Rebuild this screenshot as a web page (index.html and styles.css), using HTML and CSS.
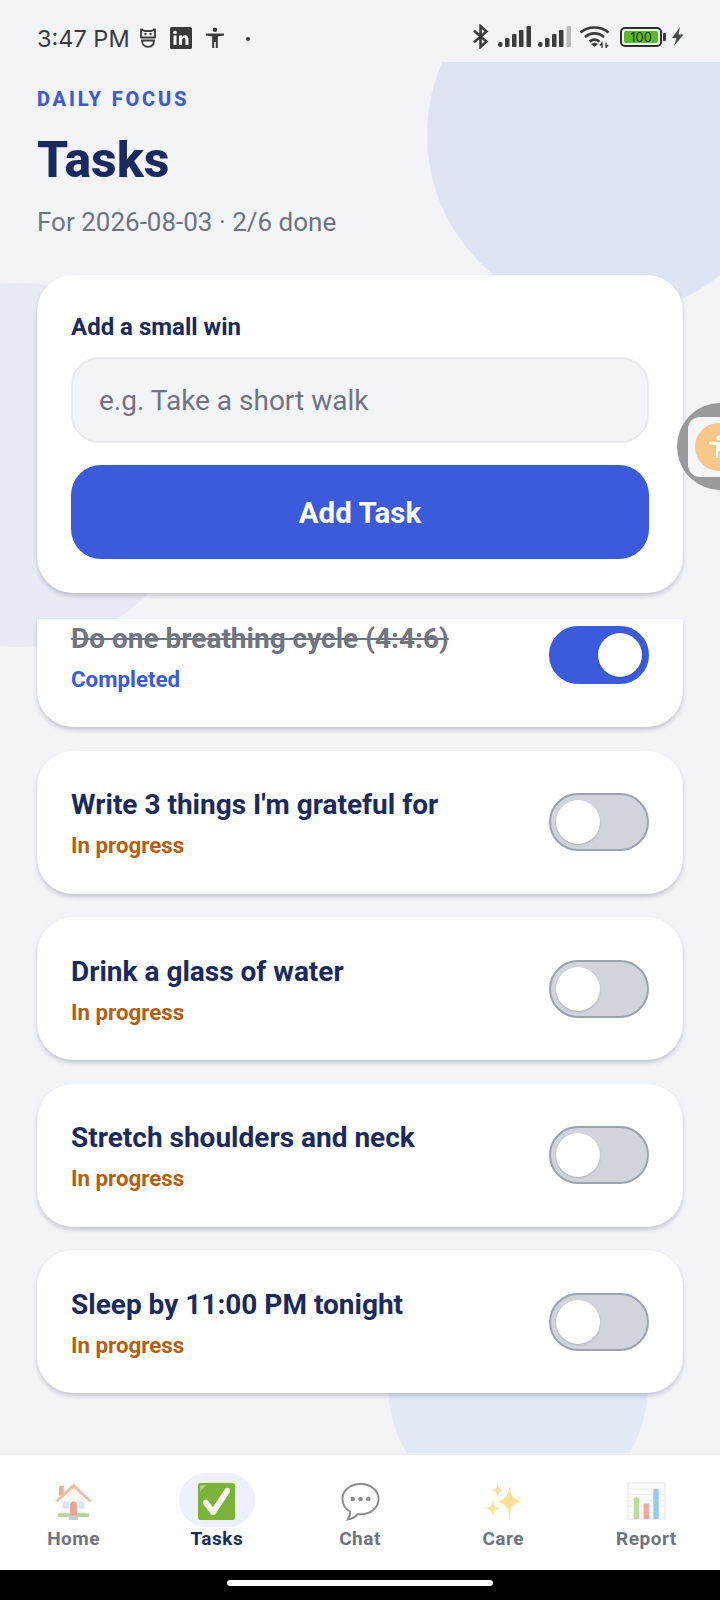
FILE: index.html
```html
<!DOCTYPE html>
<html lang="en">
<head>
<meta charset="utf-8">
<title>Tasks</title>
<link rel="stylesheet" href="styles.css">
</head>
<body>
<div class="screen">
  <div class="decor">
    <div class="blob blob-top"></div>
    <div class="blob blob-left"></div>
    <div class="blob blob-bottom"></div>
  </div>

  <div class="statusbar">
    <div class="status-left">
      <span class="time">3:47 PM</span>
      <svg class="ic-robot" viewBox="0 0 18 20"><path d="M2 1.500C3.500 1.500 4.500 2.500 5.500 3H12.500C13.500 2.500 14.500 1.500 16 1.500V9.500H2Z" fill="none" stroke="#3a3b3e" stroke-width="1.800" stroke-linejoin="round"/><circle cx="6.500" cy="6" r="1.200" fill="#3a3b3e"/><circle cx="11.500" cy="6" r="1.200" fill="#3a3b3e"/><path d="M3 12.500H15C15 16.500 12.500 18.800 9 18.800S3 16.500 3 12.500Z" fill="none" stroke="#3a3b3e" stroke-width="1.800"/></svg>
      <svg class="ic-in" viewBox="0 0 22 22"><rect width="22" height="22" rx="1.500" fill="#3a3b3e"/><rect x="3.500" y="8.500" width="3" height="9.500" fill="#fff"/><circle cx="5" cy="5.500" r="1.800" fill="#fff"/><path d="M9 8.500H12V10C12.600 9 13.700 8.300 15 8.300C17.500 8.300 18.500 10 18.500 12.500V18H15.500V13C15.500 11.800 15 11 14 11S12 11.800 12 13V18H9Z" fill="#fff"/></svg>
      <svg class="ic-person" viewBox="0 0 20 22"><circle cx="10" cy="2.800" r="2.300" fill="#3a3b3e"/><path d="M1 6.500H19V8.500L12.800 9.500V21H10.800V15H9.200V21H7.200V9.500L1 8.500Z" fill="#3a3b3e"/></svg>
      <span class="status-dot"></span>
    </div>
    <div class="status-right">
      <svg class="ic-bt" viewBox="0 0 17 25"><path d="M2 6.800 14.500 17.500 8.500 23V2L14.500 7.500 2 18.200" fill="none" stroke="#3a3b3e" stroke-width="2.500"/></svg>
      <svg class="ic-signal" viewBox="0 0 33 21"><rect x="0" y="16" width="4.500" height="5" rx="2" fill="#3a3b3e"/><rect x="7" y="12" width="4.500" height="9" rx="1.500" fill="#3a3b3e"/><rect x="14" y="8" width="4.500" height="13" rx="1" fill="#3a3b3e"/><rect x="21" y="4" width="4.500" height="17" rx="1" fill="#3a3b3e"/><rect x="28.500" y="0" width="4.500" height="21" rx="1" fill="#3a3b3e"/></svg>
      <svg class="ic-signal" viewBox="0 0 33 21"><rect x="0" y="16" width="4.500" height="5" rx="2" fill="#3a3b3e"/><rect x="7" y="12" width="4.500" height="9" rx="1.500" fill="#3a3b3e"/><rect x="14" y="8" width="4.500" height="13" rx="1" fill="#3a3b3e"/><rect x="21" y="4" width="4.500" height="17" rx="1" fill="#3a3b3e"/><rect x="28.500" y="0" width="4.500" height="21" rx="1" fill="#b9babc"/></svg>
      <svg class="ic-wifi" viewBox="0 0 31 23"><path d="M1.500 7.500C9 .8 22 .8 29.500 7.500M6 12C11.500 7.200 19.500 7.200 25 12M10.500 16.500C13.500 14.200 17.500 14.200 20.500 16.500" fill="none" stroke="#3a3b3e" stroke-width="2.600"/><path d="M12 19 15.500 17.500 19 19 15.500 22Z" fill="#3a3b3e"/><path d="M23 23V18L21 20.500M27 17.500V22.500L29 20" fill="none" stroke="#3a3b3e" stroke-width="1.300"/></svg>
      <div class="battery"><span class="battery-level">100</span></div>
      <span class="battery-cap"></span>
      <svg class="ic-bolt" viewBox="0 0 13 19"><path d="M9 0 1 11H5.500L3 19 12.500 7.500H7.500Z" fill="#4a4b4e"/></svg>
    </div>
  </div>

  <header class="head">
    <div class="eyebrow">DAILY FOCUS</div>
    <h1 class="title">Tasks</h1>
    <p class="subtitle">For 2026-08-03 · 2/6 done</p>
  </header>

  <section class="add-card">
    <label class="add-label" for="task">Add a small win</label>
    <input class="add-input" id="task" type="text" placeholder="e.g. Take a short walk">
    <button class="add-btn" type="button">Add Task</button>
  </section>

  <section class="list">
    <article class="task task-cut">
      <div class="task-text">
        <div class="task-name task-name-done">Do one breathing cycle (4:4:6)</div>
        <div class="task-state state-done">Completed</div>
      </div>
      <div class="toggle toggle-on"><span class="knob"></span></div>
    </article>
    <article class="task">
      <div class="task-text">
        <div class="task-name">Write 3 things I'm grateful for</div>
        <div class="task-state state-open">In progress</div>
      </div>
      <div class="toggle"><span class="knob"></span></div>
    </article>
    <article class="task">
      <div class="task-text">
        <div class="task-name">Drink a glass of water</div>
        <div class="task-state state-open">In progress</div>
      </div>
      <div class="toggle"><span class="knob"></span></div>
    </article>
    <article class="task">
      <div class="task-text">
        <div class="task-name">Stretch shoulders and neck</div>
        <div class="task-state state-open">In progress</div>
      </div>
      <div class="toggle"><span class="knob"></span></div>
    </article>
    <article class="task">
      <div class="task-text">
        <div class="task-name">Sleep by 11:00 PM tonight</div>
        <div class="task-state state-open">In progress</div>
      </div>
      <div class="toggle"><span class="knob"></span></div>
    </article>
  </section>

  <nav class="tabbar">
    <div class="tab">
      <span class="tab-icon faded">
        <svg viewBox="0 0 40 40"><rect x="5" y="4" width="5" height="10" fill="#c8674a"/><path d="M7 20 20 6 33 20V34H7Z" fill="#f6efe2"/><path d="M1.500 19 20 1.500 38.500 19 36 20.500 20 6 4 20.500Z" fill="#e07b4e"/><rect x="4" y="32" width="32" height="4" fill="#7fa04a"/><rect x="9" y="20" width="6" height="7" fill="#a9d4ea"/><rect x="25" y="20" width="6" height="7" fill="#a9d4ea"/><path d="M16.500 34V23C16.500 19 23.500 19 23.500 23V34Z" fill="#c8502e"/><rect x="15" y="35" width="10" height="4" fill="#9b9b9b"/></svg>
      </span>
      <span class="tab-label">Home</span>
    </div>
    <div class="tab">
      <span class="tab-icon tab-icon-active">
        <svg viewBox="0 0 40 40"><rect x="1" y="1" width="38" height="38" rx="3" fill="#7cb13a"/><path d="M3 10V5C3 3.500 4 3 5 3H10Z" fill="#a9d06a"/><path d="M9 21 16.500 31 31 9" fill="none" stroke="#f5f7f0" stroke-width="6" stroke-linecap="round" stroke-linejoin="round"/></svg>
      </span>
      <span class="tab-label tab-label-active">Tasks</span>
    </div>
    <div class="tab">
      <span class="tab-icon">
        <svg viewBox="0 0 40 40"><path d="M20 2C9.500 2 1.500 8.500 1.500 17.500C1.500 23.500 5 28 9.500 30.500C9.500 33.500 8.500 36 7 38.500C11.500 38 15 35.500 17 33C18 33 19 33 20 33C30.500 33 38.500 26.500 38.500 17.500S30.500 2 20 2Z" fill="#fff" stroke="#8a8b8d" stroke-width="2"/><circle cx="12" cy="17.500" r="2.300" fill="#8a8b8d"/><circle cx="20" cy="17.500" r="2.300" fill="#8a8b8d"/><circle cx="28" cy="17.500" r="2.300" fill="#8a8b8d"/></svg>
      </span>
      <span class="tab-label">Chat</span>
    </div>
    <div class="tab">
      <span class="tab-icon faded">
        <svg viewBox="0 0 40 40"><path d="M26 3 C27 14 29 17 38 20 C29 23 27 26 26 38 C25 26 23 23 14 20 C23 17 25 14 26 3Z" fill="#f6c533"/><path d="M14 1C14.500 6 15.500 7.500 20 8.500C15.500 9.500 14.500 11 14 16C13.500 11 12.500 9.500 8 8.500C12.500 7.500 13.500 6 14 1Z" fill="#f5b82a"/><path d="M9 18C9.600 24 11 25.500 16 27C11 28.500 9.600 30 9 36C8.400 30 7 28.500 2 27C7 25.500 8.400 24 9 18Z" fill="#f6c533"/></svg>
      </span>
      <span class="tab-label">Care</span>
    </div>
    <div class="tab">
      <span class="tab-icon faded">
        <svg viewBox="0 0 40 40"><rect x="1" y="1" width="38" height="37" fill="#fbfbfb" stroke="#c9ced3" stroke-width="1"/><path d="M1 7H39M1 13H39M1 19H39M1 25H39M1 31H39" stroke="#dcdfe3" stroke-width="1"/><rect x="7" y="16" width="5.500" height="22" fill="#7fb842"/><rect x="17" y="22" width="5.500" height="16" fill="#e8503f"/><rect x="27" y="7" width="5.500" height="31" fill="#2f95dc"/></svg>
      </span>
      <span class="tab-label">Report</span>
    </div>
  </nav>

  <div class="gesture"><span class="gesture-pill"></span></div>

  <div class="float-bubble"><span class="float-core"><span class="float-disc"><svg class="float-person" viewBox="0 0 20 22"><circle cx="10" cy="2.800" r="2.300" fill="#fff"/><path d="M1 6.500H19V8.500L12.800 9.500V21H10.800V15H9.200V21H7.200V9.500L1 8.500Z" fill="#fff"/></svg></span></span></div>
</div>
</body>
</html>
```

FILE: styles.css
```css
* { box-sizing: border-box; }
html, body { margin: 0; padding: 0; }
body { width: 720px; height: 1600px; overflow: hidden; font-family: Roboto, "Liberation Sans", sans-serif; background: #f3f4f8; }

.screen { position: relative; width: 720px; height: 1600px; overflow: hidden; display: flex; flex-direction: column; background: #f3f4f8; }

.decor { position: absolute; inset: 62px 0 147px 0; overflow: hidden; }
.blob { position: absolute; border-radius: 50%; }
.blob-top { width: 360px; height: 360px; left: 427px; top: -107px; background: #dfe4f3; }
.blob-left { width: 364px; height: 364px; left: -162px; top: 221px; background: #e8ebf4; }
.blob-bottom { width: 260px; height: 260px; left: 388px; top: 1194px; background: #e4e9f6; }

.statusbar { position: relative; height: 62px; padding: 15px 36px 0 37px; display: flex; justify-content: space-between; align-items: center; flex: none; }
.status-left, .status-right { display: flex; align-items: center; }
.time { font-family: Inter, Roboto, sans-serif; font-size: 23.500px; color: #3a3b3e; margin-right: 9px; }
.ic-robot { width: 18px; height: 20px; margin: -2px 13px 0 0; }
.ic-in { width: 22px; height: 22px; margin: -2px 13px 0 0; }
.ic-person { width: 20px; height: 22px; margin: -2px 21px 0 0; }
.status-dot { width: 4px; height: 4px; border-radius: 50%; background: #3a3b3e; }
.status-right { margin-top: -4px; }
.ic-bt { width: 17px; height: 25px; margin-right: 9px; }
.ic-signal { width: 33px; height: 21px; margin-right: 7px; }
.ic-wifi { width: 31px; height: 23px; margin: 0 10px 0 1px; }
.battery { width: 42px; height: 20px; border: 2px solid #2f3032; border-radius: 5px; padding: 2px; display: flex; }
.battery-level { flex: 1; background: #5cb82c; border-radius: 2px; font-family: Inter, Roboto, sans-serif; font-size: 13px; line-height: 12px; text-align: center; color: #1d3a10; }
.battery-cap { width: 3px; height: 8px; background: #3a3b3e; margin: 0 5px 0 1px; border-radius: 1px; }
.ic-bolt { width: 13px; height: 19px; }

.head { position: relative; padding: 25px 37px 0; flex: none; }
.eyebrow { font-size: 20px; line-height: 24px; font-weight: 800; letter-spacing: 2.800px; color: #3f5bcd; }
.title { margin: 19px 0 0; font-size: 50px; line-height: 60px; font-weight: 800; color: #1b2a5e; }
.subtitle { margin: 16px 0 0; font-size: 26px; line-height: 32px; color: #6f7480; }

.add-card { position: relative; margin: 37px 37px 0; height: 318px; padding: 36px 34px 0; background: #fff; border-radius: 36px; box-shadow: 0 3px 4px rgba(40, 50, 80, .22); flex: none; display: flex; flex-direction: column; }
.add-label { font-size: 24px; line-height: 32px; font-weight: 700; color: #1b2a5e; }
.add-input { margin-top: 14px; height: 86px; padding: 0 26px; font: 400 28px Roboto, sans-serif; color: #333; background: #f3f4f8; border: 2px solid #e8eaef; border-radius: 28px; outline: none; flex: none; }
.add-input::placeholder { color: #6f7480; opacity: 1; }
.add-btn { margin-top: 22px; height: 94px; padding-top: 3px; border: 0; border-radius: 30px; background: #3b5bdb; color: #fff; font: 700 29.500px Roboto, sans-serif; flex: none; }

.list { position: relative; margin: 26px 37px 0; display: flex; flex-direction: column; gap: 23.600px; flex: none; }
.task { height: 143px; padding: 0 34px; background: #fff; border-radius: 36px; box-shadow: 0 3px 4px rgba(40, 50, 80, .22); display: flex; align-items: center; justify-content: space-between; }
.task-cut { height: 108px; border-radius: 0 0 36px 36px; align-items: flex-start; }
.task-text { display: flex; flex-direction: column; gap: 8px; padding-top: 2px; }
.task-name { font-size: 28px; line-height: 36px; font-weight: 700; color: #1b2a5e; }
.task-name-done { color: #6f7480; text-decoration: line-through; }
.task-state { font-size: 22.300px; line-height: 28px; font-weight: 700; }
.state-done { color: #3b5bdb; }
.state-open { color: #b45f12; }

.toggle { width: 100px; height: 58px; flex: none; padding: 5px; border: 2px solid #9ca3af; border-radius: 29px; background: #d1d5db; display: flex; }
.knob { width: 44px; height: 44px; border-radius: 50%; background: #fff; box-shadow: 0 1px 2px rgba(0, 0, 0, .2); }
.toggle-on { margin-top: 7px; background: #3b5bdb; border-color: #3b5bdb; justify-content: flex-end; }

.tabbar { position: absolute; left: 0; right: 0; top: 1453px; height: 117px; background: #fff; border-top: 2px solid #eceef2; display: flex; justify-content: space-around; padding: 0 2px; }
.tab { width: 144px; display: flex; flex-direction: column; align-items: center; padding-top: 18px; }
.tab-icon { width: 76px; height: 54px; display: flex; align-items: center; justify-content: center; }
.tab-icon svg { width: 39px; height: 39px; margin-top: 3px; }
.tab-icon-active { background: #eef1fb; border-radius: 27px; }
.faded { opacity: .5; }
.tab-label { font-size: 19px; line-height: 26px; margin-top: -1px; font-weight: 700; letter-spacing: .5px; color: #6f7480; }
.tab-label-active { color: #1b2a5e; }

.gesture { position: absolute; left: 0; right: 0; top: 1570px; height: 30px; background: #000; display: flex; justify-content: center; padding-top: 10px; }
.gesture-pill { width: 266px; height: 6px; border-radius: 3px; background: #fff; }

.float-bubble { position: absolute; left: 677px; top: 403px; width: 87px; height: 87px; padding-left: 11px; border-radius: 50%; background: #9a9a9c; display: flex; align-items: center; }
.float-core { width: 64px; height: 60px; padding-left: 7px; border-radius: 12px; background: #f5f6f9; display: flex; align-items: center; }
.float-disc { width: 48px; height: 48px; border-radius: 50%; background: #f7c88a; display: flex; align-items: center; justify-content: center; }
.float-person { width: 22px; height: 24px; }
```
